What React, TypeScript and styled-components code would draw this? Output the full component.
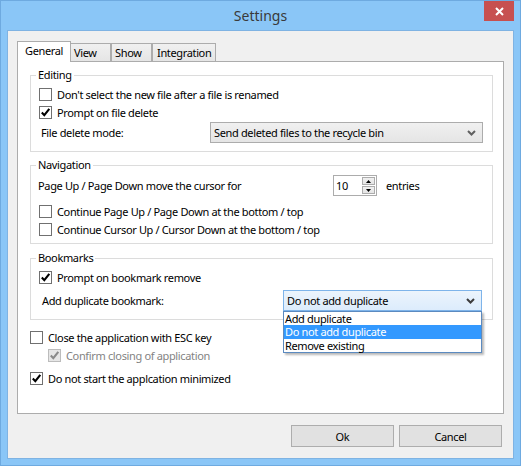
import React from "react";
import styled, { createGlobalStyle } from "styled-components";

const GlobalStyle = createGlobalStyle`
  html, body {
    margin: 0;
    padding: 0;
    background: #8ac6f7;
  }
  body {
    font-family: "Segoe UI", "Noto Sans", sans-serif;
    font-size: 11px;
    letter-spacing: -0.35px;
    color: #000;
  }
  * {
    box-sizing: border-box;
  }
`;

const Window = styled.div`
  width: 521px;
  height: 466px;
  background: #8ac6f7;
  border: 1px solid #6eaae0;
  display: flex;
  flex-direction: column;
  overflow: hidden;
`;

const TitleBar = styled.div`
  height: 29px;
  display: grid;
  grid-template-columns: 1fr auto 1fr;
  flex: none;
`;

const Title = styled.div`
  grid-column: 2;
  align-self: center;
  font-size: 14px;
  letter-spacing: 0;
  color: #3a3a3a;
`;

const CloseButton = styled.div`
  grid-column: 3;
  justify-self: end;
  align-self: start;
  width: 30px;
  height: 20px;
  margin-right: 6px;
  background: #c75050;
  display: flex;
  align-items: center;
  justify-content: center;
`;

const Client = styled.div`
  flex: 1;
  margin: 0 6px 6px 6px;
  border: 1px solid #7fb3e3;
  background: #f0f0f0;
  padding: 10px 9px 11px 9px;
  display: flex;
  flex-direction: column;
`;

const TabStrip = styled.div`
  height: 20px;
  display: flex;
  align-items: flex-end;
  flex: none;
`;

const Tab = styled.div<{ $active?: boolean; $width: number; $pad: number }>`
  position: relative;
  z-index: ${(p) => (p.$active ? 2 : 1)};
  width: ${(p) => p.$width}px;
  height: ${(p) => (p.$active ? 21 : 18)}px;
  margin-bottom: ${(p) => (p.$active ? -1 : 0)}px;
  margin-right: ${(p) => (p.$active ? -1 : 0)}px;
  padding-left: ${(p) => p.$pad}px;
  border: 1px solid #acacac;
  border-bottom: none;
  background: ${(p) =>
    p.$active ? "#fff" : "linear-gradient(#f0f0f0, #e5e5e5)"};
  line-height: ${(p) => (p.$active ? 18 : 17)}px;
  white-space: nowrap;
`;

const Panel = styled.div`
  height: 353px;
  flex: none;
  background: #fff;
  border: 1px solid #acacac;
  padding: 5px 10px 0 12px;
  display: flex;
  flex-direction: column;
`;

const Group = styled.fieldset<{ $mt: number; $pb: number }>`
  margin: ${(p) => p.$mt}px 0 0 0;
  padding: 2px 9px ${(p) => p.$pb}px 0;
  border: 1px solid #dcdcdc;
  min-width: 0;
`;

const Legend = styled.legend`
  padding: 0 2px;
  margin-left: 5px;
  line-height: 16px;
`;

const CheckRow = styled.div<{ $indent: number; $mt?: number; $disabled?: boolean }>`
  display: flex;
  align-items: center;
  gap: 5px;
  height: 18px;
  padding-left: ${(p) => p.$indent}px;
  margin-top: ${(p) => p.$mt || 0}px;
  color: ${(p) => (p.$disabled ? "#838383" : "#000")};
  white-space: nowrap;
`;

const Box = styled.span<{ $disabled?: boolean }>`
  width: 13px;
  height: 13px;
  flex: none;
  border: 1px solid ${(p) => (p.$disabled ? "#bcbcbc" : "#707070")};
  background: ${(p) => (p.$disabled ? "#e6e6e6" : "#fff")};
  display: flex;
  align-items: center;
  justify-content: center;
`;

const FieldRow = styled.div<{ $indent: number; $labelWidth: number; $mt?: number }>`
  display: flex;
  align-items: center;
  height: 21px;
  padding-left: ${(p) => p.$indent}px;
  margin-top: ${(p) => p.$mt || 0}px;
  white-space: nowrap;

  & > .label {
    width: ${(p) => p.$labelWidth}px;
    flex: none;
  }
`;

const Select = styled.div<{ $width: number; $focused?: boolean }>`
  position: relative;
  width: ${(p) => p.$width}px;
  height: 21px;
  flex: none;
  border: 1px solid ${(p) => (p.$focused ? "#7eb4ea" : "#acacac")};
  background: ${(p) =>
    p.$focused
      ? "linear-gradient(#ecf4fc, #dcecfc)"
      : "linear-gradient(#f0f0f0, #e5e5e5)"};
  display: flex;
  align-items: center;
  justify-content: space-between;
  padding: 0 6px 0 3px;
`;

const DropList = styled.div`
  position: absolute;
  top: 20px;
  left: -1px;
  right: -1px;
  z-index: 5;
  background: #fff;
  border: 1px solid #5b8ac0;
  box-shadow: 2px 2px 2px rgba(0, 0, 0, 0.28);
`;

const DropItem = styled.div<{ $selected?: boolean }>`
  height: 13px;
  line-height: 13px;
  padding-left: 1px;
  background: ${(p) => (p.$selected ? "#3399ff" : "transparent")};
  color: ${(p) => (p.$selected ? "#fff" : "#000")};
  &:nth-child(2) {
    height: 14px;
    line-height: 14px;
  }
`;

const Spin = styled.div`
  width: 44px;
  height: 21px;
  flex: none;
  border: 1px solid #acacac;
  background: #fff;
  display: flex;
  align-items: stretch;
  padding: 1px 1px 1px 0;
`;

const SpinText = styled.div`
  flex: 1;
  padding-left: 2px;
  line-height: 17px;
`;

const SpinButtons = styled.div`
  width: 13px;
  display: flex;
  flex-direction: column;
  gap: 1px;
`;

const SpinButton = styled.div`
  flex: 1;
  border: 1px solid #acacac;
  background: linear-gradient(#f0f0f0, #e5e5e5);
  display: flex;
  align-items: center;
  justify-content: center;
`;

const Entries = styled.span`
  margin-left: 9px;
`;

const Footer = styled.div`
  margin-top: 11px;
  display: flex;
  justify-content: flex-end;
  gap: 5px;
  padding-right: 2px;
`;

const Button = styled.div`
  width: 103px;
  height: 22px;
  border: 1px solid #adadad;
  background: #e1e1e1;
  display: flex;
  align-items: center;
  justify-content: center;
`;

const Chevron = ({ dark }: { dark?: boolean }) => (
  <svg width="9" height="6" viewBox="0 0 9 6">
    <polyline
      points="1,1 4.5,4.5 8,1"
      fill="none"
      stroke={dark ? "#3c3c3c" : "#606060"}
      strokeWidth="2"
    />
  </svg>
);

const Tick = ({ color }: { color: string }) => (
  <svg width="11" height="11" viewBox="0 0 11 11">
    <path d="M1.8 5.6 L4.3 8.2 L9.3 1.8" fill="none" stroke={color} strokeWidth="2.1" />
  </svg>
);

function Check({
  label,
  checked,
  disabled,
  indent,
  mt,
}: {
  label: string;
  checked?: boolean;
  disabled?: boolean;
  indent: number;
  mt?: number;
}) {
  return (
    <CheckRow $indent={indent} $mt={mt} $disabled={disabled}>
      <Box $disabled={disabled}>
        {checked && <Tick color={disabled ? "#8a8a8a" : "#000"} />}
      </Box>
      <span>{label}</span>
    </CheckRow>
  );
}

export default function App() {
  return (
    <>
      <GlobalStyle />
      <Window>
        <TitleBar>
          <Title>Settings</Title>
          <CloseButton>
            <svg width="9" height="9" viewBox="0 0 9 9">
              <path d="M1 1 L8 8 M8 1 L1 8" stroke="#fff" strokeWidth="2" />
            </svg>
          </CloseButton>
        </TitleBar>
        <Client>
          <TabStrip>
            <Tab $active $width={54} $pad={7}>General</Tab>
            <Tab $width={41} $pad={3}>View</Tab>
            <Tab $width={41} $pad={3}>Show</Tab>
            <Tab $width={64} $pad={4}>Integration</Tab>
          </TabStrip>
          <Panel>
            <Group $mt={0} $pb={8}>
              <Legend>Editing</Legend>
              <Check indent={8} label="Don't select the new file after a file is renamed" />
              <Check indent={8} checked label="Prompt on file delete" />
              <FieldRow $indent={10} $labelWidth={169} $mt={1}>
                <span className="label">File delete mode:</span>
                <Select $width={273}>
                  <span>Send deleted files to the recycle bin</span>
                  <Chevron />
                </Select>
              </FieldRow>
            </Group>

            <Group $mt={5} $pb={5}>
              <Legend>Navigation</Legend>
              <FieldRow $indent={7} $labelWidth={295}>
                <span className="label">Page Up / Page Down move the cursor for</span>
                <Spin>
                  <SpinText>10</SpinText>
                  <SpinButtons>
                    <SpinButton>
                      <svg width="5" height="3" viewBox="0 0 5 3">
                        <path d="M0 3 L2.5 0 L5 3 Z" fill="#000" />
                      </svg>
                    </SpinButton>
                    <SpinButton>
                      <svg width="5" height="3" viewBox="0 0 5 3">
                        <path d="M0 0 L2.5 3 L5 0 Z" fill="#000" />
                      </svg>
                    </SpinButton>
                  </SpinButtons>
                </Spin>
                <Entries>entries</Entries>
              </FieldRow>
              <Check indent={8} mt={6} label="Continue Page Up / Page Down at the bottom / top" />
              <Check indent={8} label="Continue Cursor Up / Cursor Down at the bottom / top" />
            </Group>

            <Group $mt={6} $pb={8}>
              <Legend>Bookmarks</Legend>
              <Check indent={8} checked label="Prompt on bookmark remove" />
              <FieldRow $indent={11} $labelWidth={241} $mt={4}>
                <span className="label">Add duplicate bookmark:</span>
                <Select $width={199} $focused>
                  <span>Do not add duplicate</span>
                  <Chevron dark />
                  <DropList>
                    <DropItem>Add duplicate</DropItem>
                    <DropItem $selected>Do not add duplicate</DropItem>
                    <DropItem>Remove existing</DropItem>
                  </DropList>
                </Select>
              </FieldRow>
            </Group>

            <Check indent={0} mt={8} label="Close the application with ESC key" />
            <Check indent={18} checked disabled label="Confirm closing of application" />
            <Check indent={0} mt={5} checked label="Do not start the applcation minimized" />
          </Panel>
          <Footer>
            <Button>Ok</Button>
            <Button>Cancel</Button>
          </Footer>
        </Client>
      </Window>
    </>
  );
}
